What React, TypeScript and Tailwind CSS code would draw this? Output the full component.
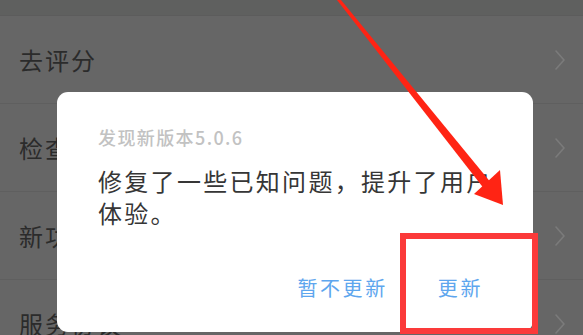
import React from 'react'

const rows = ['去评分', '检查更新', '新功能介绍', '服务协议']

function Chevron() {
  return (
    <svg width="12" height="22" viewBox="0 0 12 22" fill="none">
      <path d="M2 2 L10 11 L2 20" stroke="#7b7b7b" strokeWidth="1.6" strokeLinecap="round" strokeLinejoin="round" />
    </svg>
  )
}

export default function App() {
  return (
    <div
      className="relative w-[583px] h-[335px] overflow-hidden bg-[#666666]"
      style={{ fontFamily: '"Noto Sans CJK SC", "Noto Sans", sans-serif' }}
    >
      {/* dimmed settings list */}
      <div className="h-[16px] bg-[#5f605f] border-b border-[#5c5c5c]" />
      {rows.map((r) => (
        <div key={r} className="h-[88px] flex items-center justify-between pl-[19px] pr-[17px] border-b border-[#5f5f5f]">
          <span className="text-[24px] tracking-[2px] text-[#2b2b2b]">{r}</span>
          <Chevron />
        </div>
      ))}

      {/* update dialog */}
      <div className="absolute left-[57px] top-[92px] w-[476px] h-[240px] bg-white rounded-[11px] flex flex-col pl-[41px] pr-[50px] pt-[33px]">
        <div className="text-[18px] leading-[24px] tracking-[1.4px] font-medium text-[#c2c2c2]">发现新版本5.0.6</div>
        <div className="mt-[16px] text-[24px] leading-[32px] tracking-[2.3px] text-[#363636] whitespace-nowrap">
          修复了一些已知问题，提升了用户
          <br />
          体验。
        </div>
        <div className="mt-auto mb-[32px] flex justify-end gap-[50px] text-[20px] leading-[24px] tracking-[2.6px] text-[#5ea6ee]">
          <span>暂不更新</span>
          <span>更新</span>
        </div>
      </div>

      {/* annotation: red box */}
      <div className="absolute left-[400px] top-[233px] w-[138px] h-[101px] border-[6px] border-[#fb3a3a]" />

      {/* annotation: red arrow */}
      <svg className="absolute left-0 top-0" width="583" height="335" viewBox="0 0 583 335">
        <polygon points="337,0 341,0 492,184 485,190" fill="#ff2414" />
        <polygon points="503,205 474,194 500,170" fill="#ff2414" />
      </svg>
    </div>
  )
}
